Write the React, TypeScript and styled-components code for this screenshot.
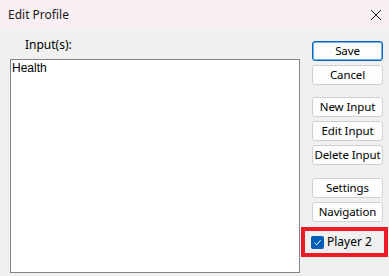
import React from "react";
import styled, { createGlobalStyle } from "styled-components";

const Global = createGlobalStyle`
  html, body { margin: 0; padding: 0; background: #f0f0f0; }
  body { width: 389px; height: 276px; overflow: hidden; font-family: "Noto Sans", "Open Sans", sans-serif; }
`;

const Window = styled.div`
  width: 389px;
  height: 276px;
  display: flex;
  flex-direction: column;
  background: #f0f0f0;
`;

const TitleBar = styled.div`
  height: 29px;
  flex: none;
  display: flex;
  align-items: center;
  justify-content: space-between;
  padding: 0 6px 0 8px;
  background: #f8eff4;
  font-size: 12px;
  color: #1a1a1a;
`;

const CloseIcon = styled.svg`
  width: 12px;
  height: 12px;
  margin-right: 1px;
`;

const Body = styled.div`
  flex: 1;
  display: flex;
  padding: 8px 0 0 10px;
`;

const LeftCol = styled.div`
  width: 290px;
  display: flex;
  flex-direction: column;
`;

const Label = styled.div`
  font-size: 12px;
  line-height: 16px;
  height: 16px;
  padding-left: 15px;
  margin-bottom: 6px;
  color: #000;
`;

const ListBox = styled.div`
  box-sizing: border-box;
  width: 290px;
  height: 214px;
  background: #fff;
  border: 1px solid #82828e;
  padding: 1px 1px;
`;

const ListItem = styled.div`
  font-family: "Liberation Sans", Arial, sans-serif;
  font-size: 12px;
  line-height: 14px;
  color: #000;
`;

const RightCol = styled.div`
  display: flex;
  flex-direction: column;
  padding-top: 4px;
  margin-left: 12px;
`;

const Button = styled.button<{ $primary?: boolean; $gap?: number }>`
  box-sizing: border-box;
  width: 71px;
  height: 20px;
  margin-top: ${(p) => p.$gap ?? 4}px;
  padding: 0;
  white-space: nowrap;
  overflow: visible;
  background: #fdfdfd;
  border: 1px solid ${(p) => (p.$primary ? "#0067c0" : "#d0d0d0")};
  border-radius: 3px;
  font-family: "Noto Sans", sans-serif;
  font-size: 11.5px;
  letter-spacing: -0.1px;
  line-height: 16px;
  color: #000;
  box-shadow: ${(p) => (p.$primary ? "inset 0 0 0 0.5px #0067c0" : "none")};
`;

const Highlight = styled.div`
  box-sizing: border-box;
  margin-top: 5px;
  margin-left: -11px;
  width: 87px;
  height: 30px;
  border: 4px solid #ed1c24;
  display: flex;
  align-items: center;
  padding-left: 6px;
  gap: 3px;
`;

const Check = styled.div`
  width: 13px;
  height: 13px;
  border-radius: 2px;
  background: #005fb8;
  display: flex;
  align-items: center;
  justify-content: center;
`;

const CheckLabel = styled.span`
  font-size: 12px;
  line-height: 16px;
  color: #000;
`;

export default function App() {
  return (
    <>
      <Global />
      <Window>
        <TitleBar>
          <span>Edit Profile</span>
          <CloseIcon viewBox="0 0 12 12">
            <path d="M1 1 L11 11 M11 1 L1 11" stroke="#1a1a1a" strokeWidth="1" fill="none" />
          </CloseIcon>
        </TitleBar>
        <Body>
          <LeftCol>
            <Label>Input(s):</Label>
            <ListBox>
              <ListItem>Health</ListItem>
            </ListBox>
          </LeftCol>
          <RightCol>
            <Button $primary $gap={0}>Save</Button>
            <Button>Cancel</Button>
            <Button $gap={12}>New Input</Button>
            <Button>Edit Input</Button>
            <Button>Delete Input</Button>
            <Button $gap={13}>Settings</Button>
            <Button>Navigation</Button>
            <Highlight>
              <Check>
                <svg width="9" height="9" viewBox="0 0 9 9">
                  <path d="M1.5 4.8 L3.6 6.8 L7.6 2.2" stroke="#fff" strokeWidth="1" fill="none" />
                </svg>
              </Check>
              <CheckLabel>Player 2</CheckLabel>
            </Highlight>
          </RightCol>
        </Body>
      </Window>
    </>
  );
}
